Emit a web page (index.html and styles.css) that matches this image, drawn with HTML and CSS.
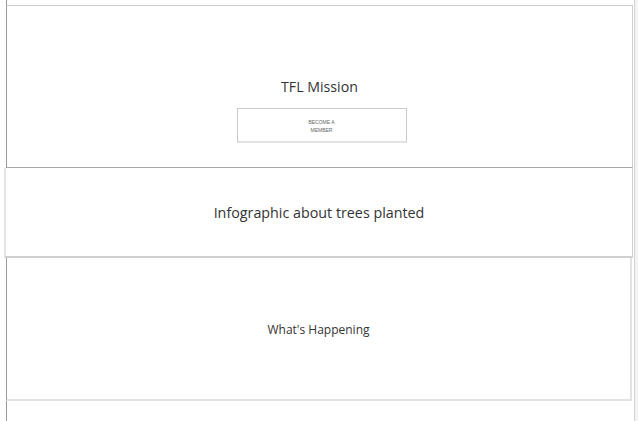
FILE: index.html
```html
<!DOCTYPE html>
<html lang="en">
<head>
<meta charset="utf-8">
<title>TFL</title>
<link rel="stylesheet" href="styles.css">
</head>
<body>
<div class="page">
  <div class="topgap"></div>
  <section class="mission">
    <h1 class="title">TFL Mission</h1>
    <a class="member-btn" href="#">BECOME A<br>MEMBER</a>
  </section>
  <section class="infographic">
    <h2 class="title">Infographic about trees planted</h2>
  </section>
  <section class="happening">
    <h2 class="small-title">What's Happening</h2>
  </section>
  <div class="rest"></div>
</div>
</body>
</html>
```

FILE: styles.css
```css
html {
  background: #f3f3f3;
}
body {
  margin: 0;
  font-family: "Open Sans", "Noto Sans", sans-serif;
  color: #333;
}
* {
  box-sizing: border-box;
}
.page {
  width: 635px;
  height: 421px;
  background: #fff;
  border-right: 1px solid #d4d4d4;
  display: flex;
  flex-direction: column;
  overflow: hidden;
}
.topgap {
  height: 5px;
  margin-left: 6px;
  border-left: 1px solid #9a9a9a;
  flex: none;
}
.mission {
  flex: none;
  margin-left: 6px;
  width: 627px;
  height: 163px;
  border-top: 1px solid #cfcfcf;
  border-left: 1px solid #9a9a9a;
  border-right: 1px solid #cfcfcf;
  border-bottom: 1px solid #a8a8a8;
  display: flex;
  flex-direction: column;
  align-items: center;
  padding-top: 71px;
}
.title {
  margin: 0;
  font-weight: 400;
  font-size: 14.5px;
  line-height: 20px;
  color: #333;
}
.mission .title {
  font-size: 14.2px;
}
.member-btn {
  margin-top: 11px;
  margin-left: 4px;
  width: 170px;
  height: 35px;
  border: 1px solid #cacaca;
  border-bottom: 2px solid #e2e2e2;
  display: flex;
  align-items: center;
  justify-content: center;
  text-align: center;
  font-family: "Liberation Sans", Arial, sans-serif;
  font-size: 5px;
  line-height: 8px;
  color: #666;
  text-decoration: none;
  padding-top: 1px;
}
.infographic {
  flex: none;
  margin-left: 4px;
  width: 629px;
  height: 90px;
  border-left: 2px solid #e4e4e4;
  border-right: 1px solid #cfcfcf;
  border-bottom: 2px solid #d0d0d0;
  display: flex;
  align-items: center;
  justify-content: center;
  padding-top: 2px;
}
.infographic .title {
  font-size: 14.3px;
}
.happening {
  flex: none;
  margin-left: 6px;
  width: 626px;
  height: 143px;
  border-left: 1px solid #9a9a9a;
  border-right: 2px solid #e2e2e2;
  border-bottom: 2px solid #e2e2e2;
  display: flex;
  align-items: center;
  justify-content: center;
  padding-top: 3px;
}
.small-title {
  margin: 0;
  font-weight: 400;
  font-size: 12px;
  line-height: 16px;
  color: #333;
}
.rest {
  flex: 1;
  margin-left: 6px;
  border-left: 1px solid #9a9a9a;
}
```
